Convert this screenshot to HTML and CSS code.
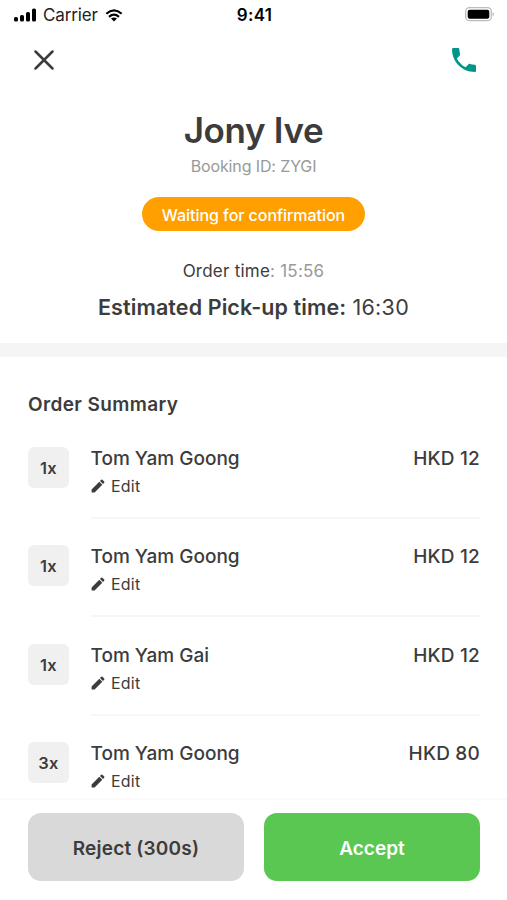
FILE: index.html
```html
<!DOCTYPE html>
<html lang="en">
<head>
<meta charset="utf-8">
<meta name="viewport" content="width=device-width, initial-scale=1">
<title>Booking ZYGI</title>
<link rel="stylesheet" href="styles.css">
</head>
<body>
<svg class="defs" aria-hidden="true"><symbol id="pencil" viewBox="0 0 14 14"><path d="M.6 10.400 8.300 2.700l3 3L3.600 13.400H.6zM9 2l1.200-1.200q.6-.5 1.200 0l1.800 1.800q.5.6 0 1.200l-1.200 1.200z" fill="currentColor"/></symbol></svg>
<div class="screen">
  <div class="status">
    <div class="carrier">
      <svg class="signal" viewBox="0 0 22 14"><rect x="0" y="9" width="4" height="4.500" rx="1.600"/><rect x="6" y="7" width="4" height="6.500" rx="1.600"/><rect x="12" y="4" width="4" height="9.500" rx="1.600"/><rect x="18" y="0.500" width="4" height="13" rx="1.600"/></svg>
      <span>Carrier</span>
      <svg class="wifi" viewBox="0 0 18 13"><path d="M1.300 4.800Q9-2 16.700 4.800M4 7.800q5-4.200 10 0" fill="none" stroke="#000" stroke-width="2.200"/><path d="M6 9.600q3-2.200 6 0l-3 3z"/></svg>
    </div>
    <div class="clock">9:41</div>
    <svg class="battery" viewBox="0 0 30 15"><rect x=".7" y=".7" width="25.600" height="13" rx="3.800" fill="#fff" stroke="#bcbcbc" stroke-width="1.300"/><rect x="2.700" y="2.700" width="21.600" height="9" rx="2"/><path d="M27.600 5q3 2.200 0 4.400z" fill="#bcbcbc"/></svg>
  </div>
  <div class="nav">
    <svg class="close" viewBox="0 0 20 20"><path d="M1.500 1.500l17 17m0-17l-17 17" stroke="#3c3c3c" stroke-width="2.500" stroke-linecap="round"/></svg>
    <svg class="phone" viewBox="3 3 18 18"><path d="M6.620 10.790c1.440 2.830 3.760 5.140 6.590 6.590l2.200-2.200c.27-.27.67-.36 1.020-.24 1.120.37 2.330.57 3.570.57.550 0 1 .45 1 1V20c0 .55-.45 1-1 1-9.390 0-17-7.610-17-17 0-.55.45-1 1-1h3.500c.55 0 1 .45 1 1 0 1.250.2 2.450.57 3.570.11.350.030.740-.25 1.020l-2.200 2.200z" fill="#009688"/></svg>
  </div>
  <header class="booking">
    <h1>Jony Ive</h1>
    <p class="ref">Booking ID: ZYGI</p>
    <div class="badge">Waiting for confirmation</div>
    <p class="ordered">Order time<span>: 15:56</span></p>
    <p class="pickup"><b>Estimated Pick-up time:</b> <span>16:30</span></p>
  </header>
  <main class="summary">
    <h2>Order Summary</h2>
    <article class="item"><div class="qty">1x</div><div class="detail"><div><h3>Tom Yam Goong</h3><div class="edit"><svg><use href="#pencil"/></svg>Edit</div></div><div class="price">HKD 12</div></div></article>
    <article class="item"><div class="qty">1x</div><div class="detail"><div><h3>Tom Yam Goong</h3><div class="edit"><svg><use href="#pencil"/></svg>Edit</div></div><div class="price">HKD 12</div></div></article>
    <article class="item"><div class="qty">1x</div><div class="detail"><div><h3>Tom Yam Gai</h3><div class="edit"><svg><use href="#pencil"/></svg>Edit</div></div><div class="price">HKD 12</div></div></article>
    <article class="item"><div class="qty">3x</div><div class="detail"><div><h3>Tom Yam Goong</h3><div class="edit"><svg><use href="#pencil"/></svg>Edit</div></div><div class="price">HKD 80</div></div></article>
  </main>
  <footer class="actions">
    <button class="reject">Reject (300s)</button>
    <button class="accept">Accept</button>
  </footer>
</div>
</body>
</html>
```
FILE: styles.css
```css
* { box-sizing: border-box; margin: 0; padding: 0; }
body { background: #fff; color: #3c3c3c; font-family: Inter, "Liberation Sans", sans-serif; white-space: nowrap; }
svg { display: block; flex: none; }
.defs { width: 0; height: 0; position: absolute; }
.screen { height: 900px; display: flex; flex-direction: column; overflow: hidden; }
.status { height: 30px; flex: none; display: grid; grid-template-columns: 1fr auto 1fr; align-items: center; padding: 0 12px 2px 14px; color: #000; }
.carrier { display: flex; align-items: center; font-size: 17px; letter-spacing: -.15px; color: #222; }
.carrier span, .clock { padding-top: 2px; }
.signal { width: 22px; height: 14px; margin: 2px 7px 0 0; }
.wifi { width: 18px; height: 13px; margin: 2px 0 0 7px; }
.clock { font-size: 17px; font-weight: 600; letter-spacing: .3px; }
.battery { width: 30px; height: 15px; justify-self: end; }
.nav { height: 60px; flex: none; display: flex; justify-content: space-between; align-items: center; padding: 0 31px 0 34px; }
.close { width: 20px; height: 20px; }
.phone { width: 24px; height: 24px; }
.booking { height: 253px; flex: none; display: flex; flex-direction: column; align-items: center; padding-top: 19px; }
h1 { font-size: 35px; line-height: 42px; font-weight: 600; letter-spacing: -.35px; }
.ref { margin-top: 5px; font-size: 16px; line-height: 20px; letter-spacing: -.12px; color: #999; }
.badge { margin-top: 21px; width: 223px; height: 34px; border-radius: 17px; background: #ffa000; color: #fff; font-size: 16px; font-weight: 500; line-height: 36px; letter-spacing: -.05px; text-align: center; }
.ordered { margin-top: 29px; font-size: 17px; line-height: 22px; letter-spacing: .23px; }
.ordered span { color: #999; }
.pickup { margin-top: 11px; font-size: 21.500px; line-height: 28px; letter-spacing: .1px; }
.pickup b { font-weight: 600; }
.pickup span { letter-spacing: .3px; }
.summary { border-top: 14px solid #f5f5f5; padding: 36px 27px 0 28px; flex: 1; min-height: 0; overflow: hidden; }
h2 { font-size: 19px; line-height: 24px; font-weight: 600; letter-spacing: .38px; margin-bottom: 29.800px; }
.item { height: 98.400px; display: flex; gap: 22px; }
.qty { width: 41px; height: 41px; flex: none; border-radius: 6px; background: #f0f0f0; font-size: 16.500px; font-weight: 600; line-height: 43px; letter-spacing: .2px; text-align: center; }
.detail { flex: 1; height: 72px; display: flex; justify-content: space-between; border-bottom: 2px solid #f7f7f7; }
h3, .price { font-size: 19px; line-height: 24px; font-weight: 500; }
h3 { margin-left: -.5px; }
.price { letter-spacing: .2px; }
.edit { display: flex; align-items: center; font-size: 16px; line-height: 20px; letter-spacing: .2px; margin-top: 5px; }
.edit svg { width: 14px; height: 14px; margin: 0 6px 0 0; }
.actions { height: 102px; flex: none; display: flex; gap: 20px; padding: 13px 27px 20px 28px; border-top: 2px solid #fafafa; }
button { flex: 1; height: 68px; border: 0; border-radius: 13px; font: 600 19px Inter, "Liberation Sans", sans-serif; letter-spacing: .2px; color: #3c3c3c; background: #d9d9d9; padding-top: 2px; }
.accept { letter-spacing: 0; color: #fff; background: #5bc753; }
```
